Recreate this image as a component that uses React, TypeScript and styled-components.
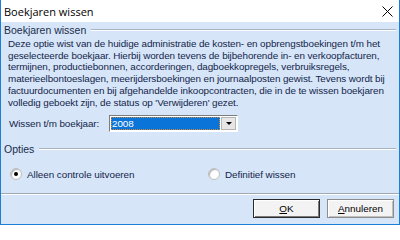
import styled, { createGlobalStyle } from "styled-components";

const GlobalStyle = createGlobalStyle`
  body {
    margin: 0;
    background: #ffffff;
  }
`;

const Window = styled.div`
  width: 400px;
  height: 225px;
  box-sizing: border-box;
  display: flex;
  flex-direction: column;
  border: 1px solid #1c7fd6;
  border-top: none;
  font-family: "Liberation Sans", sans-serif;
  overflow: hidden;
`;

const TitleBar = styled.div`
  height: 22px;
  flex-shrink: 0;
  display: flex;
  align-items: center;
  justify-content: space-between;
  background: #ffffff;
  padding: 0 6px 0 3px;
`;

const Title = styled.span`
  font-family: "Open Sans", "Noto Sans", sans-serif;
  font-size: 11px;
  color: #000000;
`;

const Body = styled.div`
  flex: 1;
  display: flex;
  flex-direction: column;
  background: #d6e6f8;
  padding-top: 1px;
`;

const GroupHeader = styled.div`
  display: flex;
  align-items: center;
  gap: 5px;
  padding: 0 3px 0 3px;
  height: 13px;
  font-family: "Liberation Sans", sans-serif;
  font-size: 10.5px;
  color: #1b2c4c;

  &::after {
    content: "";
    flex: 1;
    height: 1px;
    background: #a7b3c0;
    border-bottom: 1px solid #ffffff;
  }
`;

const Paragraph = styled.p`
  margin: 2px 0 0 0;
  padding: 0 7px;
  font-size: 9.9px;
  letter-spacing: -0.1px;
  line-height: 11.7px;
  white-space: nowrap;
  color: #14244a;
`;

const FieldRow = styled.div`
  display: grid;
  grid-template-columns: 100px 129px;
  align-items: center;
  margin: 7px 0 0 8px;
  font-size: 9.9px;
  letter-spacing: -0.1px;
  color: #14244a;
`;

const Select = styled.div`
  height: 17px;
  box-sizing: border-box;
  display: flex;
  border-top: 1px solid #7d7d7d;
  border-left: 1px solid #7d7d7d;
  border-bottom: 1px solid #ffffff;
  border-right: 1px solid #ffffff;
  background: #ffffff;
  padding: 1px;
`;

const SelectValue = styled.div`
  flex: 1;
  background: #0a74d8;
  color: #ffffff;
  outline: 1px dotted #d08a3a;
  outline-offset: -1px;
  padding-left: 1px;
  line-height: 13px;
  font-size: 9.9px;
`;

const DropButton = styled.div`
  width: 15px;
  margin-left: 1px;
  background: #e6e6e6;
  border: 1px solid #b5b5b5;
  box-sizing: border-box;
  display: flex;
  align-items: center;
  justify-content: center;

  &::after {
    content: "";
    border-left: 3px solid transparent;
    border-right: 3px solid transparent;
    border-top: 3px solid #000000;
  }
`;

const OptionsGroup = styled.div`
  margin-top: 10px;
`;

const RadioRow = styled.div`
  display: grid;
  grid-template-columns: 198px 1fr;
  padding: 9px 0 0 9px;
  height: 20px;
`;

const RadioLabel = styled.label`
  display: flex;
  align-items: center;
  gap: 5px;
  font-size: 9.9px;
  letter-spacing: -0.05px;
  color: #14244a;
`;

const RadioCircle = styled.span<{ $checked?: boolean }>`
  width: 10px;
  height: 10px;
  border-radius: 50%;
  background: #ffffff;
  border: 1px solid #bdbdbd;
  box-shadow: inset 1px 1px 1px #b0b0b0;
  display: flex;
  align-items: center;
  justify-content: center;

  &::after {
    content: "";
    width: 4px;
    height: 4px;
    border-radius: 50%;
    background: ${(p) => (p.$checked ? "#000000" : "transparent")};
  }
`;

const Separator = styled.div`
  height: 1px;
  margin-top: 9px;
  background: #a0a8b2;
  border-bottom: 1px solid #ffffff;
`;

const ButtonBar = styled.div`
  flex: 1;
  display: flex;
  justify-content: flex-end;
  align-items: flex-start;
  gap: 7px;
  padding: 4px 5px 0 0;
`;

const Button = styled.button<{ $default?: boolean }>`
  width: 67px;
  height: 19px;
  box-sizing: border-box;
  padding: 0;
  background: #f3f3f3;
  border: 1px solid ${(p) => (p.$default ? "#2b2b2b" : "#8c8c8c")};
  box-shadow: ${(p) =>
    p.$default
      ? "inset 1px 1px 0 #ffffff, inset -1px -1px 0 #7a7a7a"
      : "inset 1px 1px 0 #ffffff, inset -1px -1px 0 #c0c0c0"};
  font-family: "Liberation Sans", sans-serif;
  font-size: 9.9px;
  color: #000000;

  u {
    text-decoration: underline;
  }
`;

const CloseIcon = () => (
  <svg width="11" height="11" viewBox="0 0 11 11">
    <path d="M0.5 0.5 L10.5 10.5 M10.5 0.5 L0.5 10.5" stroke="#000" strokeWidth="1" />
  </svg>
);

export default function App() {
  return (
    <>
      <GlobalStyle />
      <Window>
        <TitleBar>
          <Title>Boekjaren wissen</Title>
          <CloseIcon />
        </TitleBar>
        <Body>
          <GroupHeader>Boekjaren wissen</GroupHeader>
          <Paragraph>
            Deze optie wist van de huidige administratie de kosten- en opbrengstboekingen t/m het
            <br />
            geselecteerde boekjaar. Hierbij worden tevens de bijbehorende in- en verkoopfacturen,
            <br />
            termijnen, productiebonnen, accorderingen, dagboekkopregels, verbruiksregels,
            <br />
            materieelbontoeslagen, meerijdersboekingen en journaalposten gewist. Tevens wordt bij
            <br />
            factuurdocumenten en bij afgehandelde inkoopcontracten, die in de te wissen boekjaren
            <br />
            volledig geboekt zijn, de status op 'Verwijderen' gezet.
          </Paragraph>
          <FieldRow>
            <span>Wissen t/m boekjaar:</span>
            <Select>
              <SelectValue>2008</SelectValue>
              <DropButton />
            </Select>
          </FieldRow>
          <OptionsGroup>
            <GroupHeader>Opties</GroupHeader>
            <RadioRow>
              <RadioLabel>
                <RadioCircle $checked />
                Alleen controle uitvoeren
              </RadioLabel>
              <RadioLabel>
                <RadioCircle />
                Definitief wissen
              </RadioLabel>
            </RadioRow>
          </OptionsGroup>
          <Separator />
          <ButtonBar>
            <Button $default>
              <u>O</u>K
            </Button>
            <Button>
              <u>A</u>nnuleren
            </Button>
          </ButtonBar>
        </Body>
      </Window>
    </>
  );
}
